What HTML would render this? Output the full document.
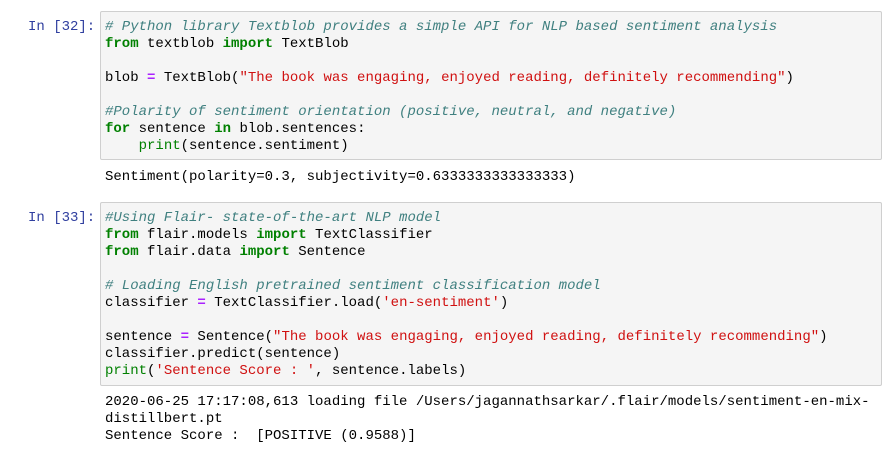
<!DOCTYPE html>
<html><head><style>
body{margin:0;background:#fff;width:895px;height:449px;overflow:hidden;position:relative;font-family:"Liberation Mono",monospace;font-size:14px;}
.p{position:absolute;left:28px;color:#303f9f;line-height:17px;white-space:pre;}
.box{position:absolute;left:100px;width:782px;background:#f5f5f5;border:1px solid #cfcfcf;border-radius:2px;box-sizing:border-box;padding:7px 4px 5px;}
pre{margin:0;font:inherit;line-height:17px;color:#000;}
.o{position:absolute;left:105px;}
.c{color:#408080;font-style:italic}
.k{color:#008000;font-weight:bold}
.b{color:#008000}
.s{color:#d01010}
.e{color:#aa22ff;font-weight:bold}
</style></head><body>
<div class="p" style="top:19px">In [32]:</div>
<div class="box" style="top:11px;height:149px"><pre><span class="c"># Python library Textblob provides a simple API for NLP based sentiment analysis</span>
<span class="k">from</span> textblob <span class="k">import</span> TextBlob

blob <span class="e">=</span> TextBlob(<span class="s">"The book was engaging, enjoyed reading, definitely recommending"</span>)

<span class="c">#Polarity of sentiment orientation (positive, neutral, and negative)</span>
<span class="k">for</span> sentence <span class="k">in</span> blob<span>.</span>sentences:
    <span class="b">print</span>(sentence<span>.</span>sentiment)</pre></div>
<pre class="o" style="top:169px">Sentiment(polarity=0.3, subjectivity=0.6333333333333333)</pre>
<div class="p" style="top:210px">In [33]:</div>
<div class="box" style="top:202px;height:184px"><pre><span class="c">#Using Flair- state-of-the-art NLP model</span>
<span class="k">from</span> flair.models <span class="k">import</span> TextClassifier
<span class="k">from</span> flair.data <span class="k">import</span> Sentence

<span class="c"># Loading English pretrained sentiment classification model</span>
classifier <span class="e">=</span> TextClassifier.load(<span class="s">'en-sentiment'</span>)

sentence <span class="e">=</span> Sentence(<span class="s">"The book was engaging, enjoyed reading, definitely recommending"</span>)
classifier.predict(sentence)
<span class="b">print</span>(<span class="s">'Sentence Score : '</span>, sentence.labels)</pre></div>
<pre class="o" style="top:394px">2020-06-25 17:17:08,613 loading file /Users/jagannathsarkar/.flair/models/sentiment-en-mix-
distillbert.pt
Sentence Score :  [POSITIVE (0.9588)]</pre>
</body></html>
